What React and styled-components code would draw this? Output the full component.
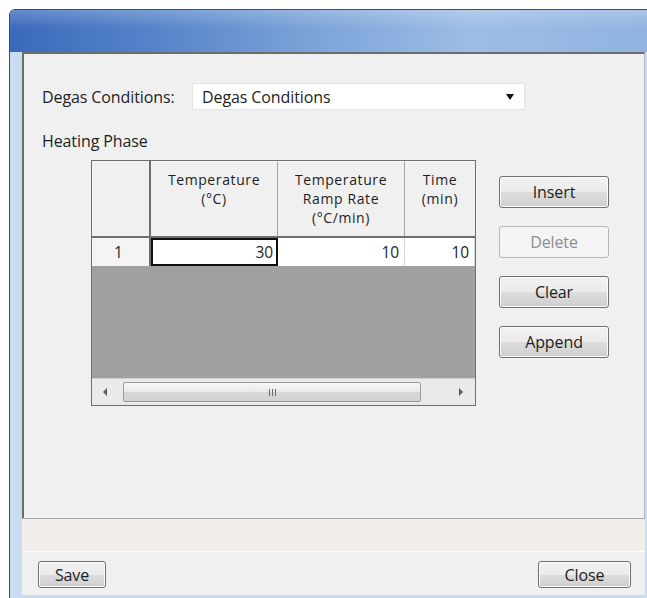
import React from "react";
import styled, { createGlobalStyle } from "styled-components";

const Global = createGlobalStyle`
  html, body {
    margin: 0;
    padding: 0;
    background: #ffffff;
    overflow: hidden;
  }
  body {
    font-family: "Open Sans", "Liberation Sans", sans-serif;
    color: #1e1e1e;
  }
`;

const headers = [
  ["Temperature", "(°C)"],
  ["Temperature", "Ramp Rate", "(°C/min)"],
  ["Time", "(min)"],
];

const rows = [["30", "10", "10"]];

export default function App() {
  return (
    <>
      <Global />
      <Window>
        <TitleBar />
        <Frame>
          <Client>
            <Panel>
              <FieldRow>
                <Label>Degas Conditions:</Label>
                <Combo>
                  <span>Degas Conditions</span>
                  <Caret />
                </Combo>
              </FieldRow>
              <Section>Heating Phase</Section>
              <GridArea>
                <TableBox>
                  <HeadRow>
                    <Corner />
                    {headers.map((lines, i) => (
                      <HeadCell key={i} $last={i === headers.length - 1}>
                        {lines.map((l) => (
                          <div key={l}>{l}</div>
                        ))}
                      </HeadCell>
                    ))}
                  </HeadRow>
                  {rows.map((r, ri) => (
                    <DataRow key={ri}>
                      <RowHead>{ri + 1}</RowHead>
                      {r.map((v, ci) => (
                        <Cell key={ci} $selected={ci === 0}>
                          {v}
                        </Cell>
                      ))}
                    </DataRow>
                  ))}
                  <Empty />
                  <HScroll>
                    <Arrow $dir="left" />
                    <Thumb>
                      <Grip />
                    </Thumb>
                    <Arrow $dir="right" />
                  </HScroll>
                </TableBox>
                <Buttons>
                  <Button>Insert</Button>
                  <Button disabled>Delete</Button>
                  <Button>Clear</Button>
                  <Button>Append</Button>
                </Buttons>
              </GridArea>
            </Panel>
            <Status />
            <Footer>
              <Button $w="68px" $h="27px">Save</Button>
              <Button $w="93px" $h="27px">Close</Button>
            </Footer>
          </Client>
        </Frame>
      </Window>
    </>
  );
}

const Window = styled.div`
  margin: 9px 0 0 9px;
  width: 660px;
  border: 1px solid #4a4d52;
  border-bottom: none;
  border-radius: 6px 6px 0 0;
  background: #c9dcf1;
  overflow: hidden;
`;

const TitleBar = styled.div`
  height: 42px;
  background:
    linear-gradient(to bottom, rgba(255, 255, 255, 0.22) 0, rgba(255, 255, 255, 0) 45%),
    linear-gradient(to right, #3a69bb 0%, #5584ca 22%, #7ba2d8 45%, #9dbde6 70%, #8fb2e0 100%);
`;

const Frame = styled.div`
  padding: 0 0 6px 12px;
`;

const Client = styled.div`
  width: 623px;
  background: #f0f0f0;
`;

const Panel = styled.div`
  box-sizing: border-box;
  height: 466px;
  border-top: 2px solid #6c6c6c;
  border-left: 2px solid #6c6c6c;
  border-right: 1px solid #b4b4b4;
  padding: 29px 0 0 18px;
`;

const FieldRow = styled.div`
  display: flex;
  align-items: center;
  font-size: 16px;
  letter-spacing: -0.1px;
`;

const Label = styled.div`
  width: 150px;
`;

const Combo = styled.div`
  box-sizing: border-box;
  width: 333px;
  height: 27px;
  display: flex;
  align-items: center;
  justify-content: space-between;
  padding: 0 10px 0 9px;
  background: #ffffff;
  border: 1px solid #e4e4e4;
`;

const Caret = styled.i`
  width: 0;
  height: 0;
  border-left: 4px solid transparent;
  border-right: 4px solid transparent;
  border-top: 6px solid #111;
`;

const Section = styled.div`
  margin-top: 21px;
  font-size: 16px;
  letter-spacing: -0.1px;
  line-height: 20px;
`;

const GridArea = styled.div`
  display: flex;
  align-items: flex-start;
  gap: 23px;
  margin: 9px 0 0 49px;
`;

const TableBox = styled.div`
  box-sizing: border-box;
  width: 385px;
  height: 246px;
  border: 1px solid #6e6e6e;
  display: flex;
  flex-direction: column;
  background: #a0a0a0;
  font-size: 15.5px;
  letter-spacing: -0.1px;
`;

const cols = "59px 127px 127px 1fr";

const HeadRow = styled.div`
  display: grid;
  grid-template-columns: ${cols};
  height: 75px;
  background: #f0f0f0;
  border-bottom: 2px solid #6e6e6e;
`;

const Corner = styled.div`
  border-right: 2px solid #6e6e6e;
`;

/* header captions stack one line per entry */
const HeadCell = styled.div`
  padding-top: 8px;
  text-align: center;
  font-size: 14px;
  letter-spacing: 0.6px;
  line-height: 19px;
  border-right: ${(p) => (p.$last ? "none" : "1px solid #a3a3a3")};
  border-top: 1px solid #fbfbfb;
`;

const DataRow = styled.div`
  display: grid;
  grid-template-columns: ${cols};
  height: 28px;
  background: #ffffff;
`;

const RowHead = styled.div`
  display: flex;
  align-items: center;
  justify-content: center;
  padding-right: 4px;
  background: #f4f4f4;
  border-right: 2px solid #6e6e6e;
`;

const Cell = styled.div`
  box-sizing: border-box;
  display: flex;
  align-items: center;
  justify-content: flex-end;
  padding-right: ${(p) => (p.$selected ? "3px" : "5px")};
  border: ${(p) => (p.$selected ? "2px solid #111" : "none")};
  border-right: ${(p) => (p.$selected ? "2px solid #111" : "1px solid #d8d8d8")};
`;

const Empty = styled.div`
  flex: 1;
  background: #a0a0a0;
`;

const HScroll = styled.div`
  height: 26px;
  display: flex;
  align-items: center;
  background: #eaeaea;
  border-top: 1px solid #d0d0d0;
`;

const Arrow = styled.i`
  width: 0;
  height: 0;
  margin: ${(p) => (p.$dir === "left" ? "0 16px 0 11px" : "0 0 0 auto")};
  margin-right: ${(p) => (p.$dir === "right" ? "12px" : "16px")};
  border-top: 4px solid transparent;
  border-bottom: 4px solid transparent;
  ${(p) =>
    p.$dir === "left" ? "border-right: 4px solid #5a5a5a;" : "border-left: 4px solid #5a5a5a;"}
`;

const Thumb = styled.div`
  box-sizing: border-box;
  width: 298px;
  height: 20px;
  display: flex;
  align-items: center;
  justify-content: center;
  border: 1px solid #9a9a9a;
  border-radius: 2px;
  background: linear-gradient(to bottom, #f6f6f6 0%, #eaeaea 50%, #d9d9d9 51%, #d2d2d2 100%);
`;

const Grip = styled.div`
  width: 7px;
  height: 7px;
  background: repeating-linear-gradient(to right, #6a6a6a 0 1px, transparent 1px 3px);
`;

const Buttons = styled.div`
  display: flex;
  flex-direction: column;
  gap: 18px;
  margin-top: 16px;
`;

const Button = styled.button`
  box-sizing: border-box;
  width: ${(p) => p.$w || "110px"};
  height: ${(p) => p.$h || "32px"};
  padding: 0;
  font-family: "Open Sans", "Liberation Sans", sans-serif;
  font-size: 16px;
  letter-spacing: -0.1px;
  color: #1e1e1e;
  border: 1px solid #707070;
  border-radius: 3px;
  box-shadow: inset 0 0 0 1px #fcfcfc;
  background: linear-gradient(to bottom, #f2f2f2 0%, #ebebeb 50%, #dddddd 51%, #cfcfcf 100%);

  &:disabled {
    color: #8d8d8d;
    border-color: #b5b8bb;
    background: #f4f4f4;
    box-shadow: none;
  }
`;

const Status = styled.div`
  height: 32px;
  background: #f1eeec;
  border-top: 1px solid #a9a9a9;
  border-bottom: 1px solid #ffffff;
`;

const Footer = styled.div`
  display: flex;
  justify-content: space-between;
  padding: 9px 14px 7px 16px;
`;
